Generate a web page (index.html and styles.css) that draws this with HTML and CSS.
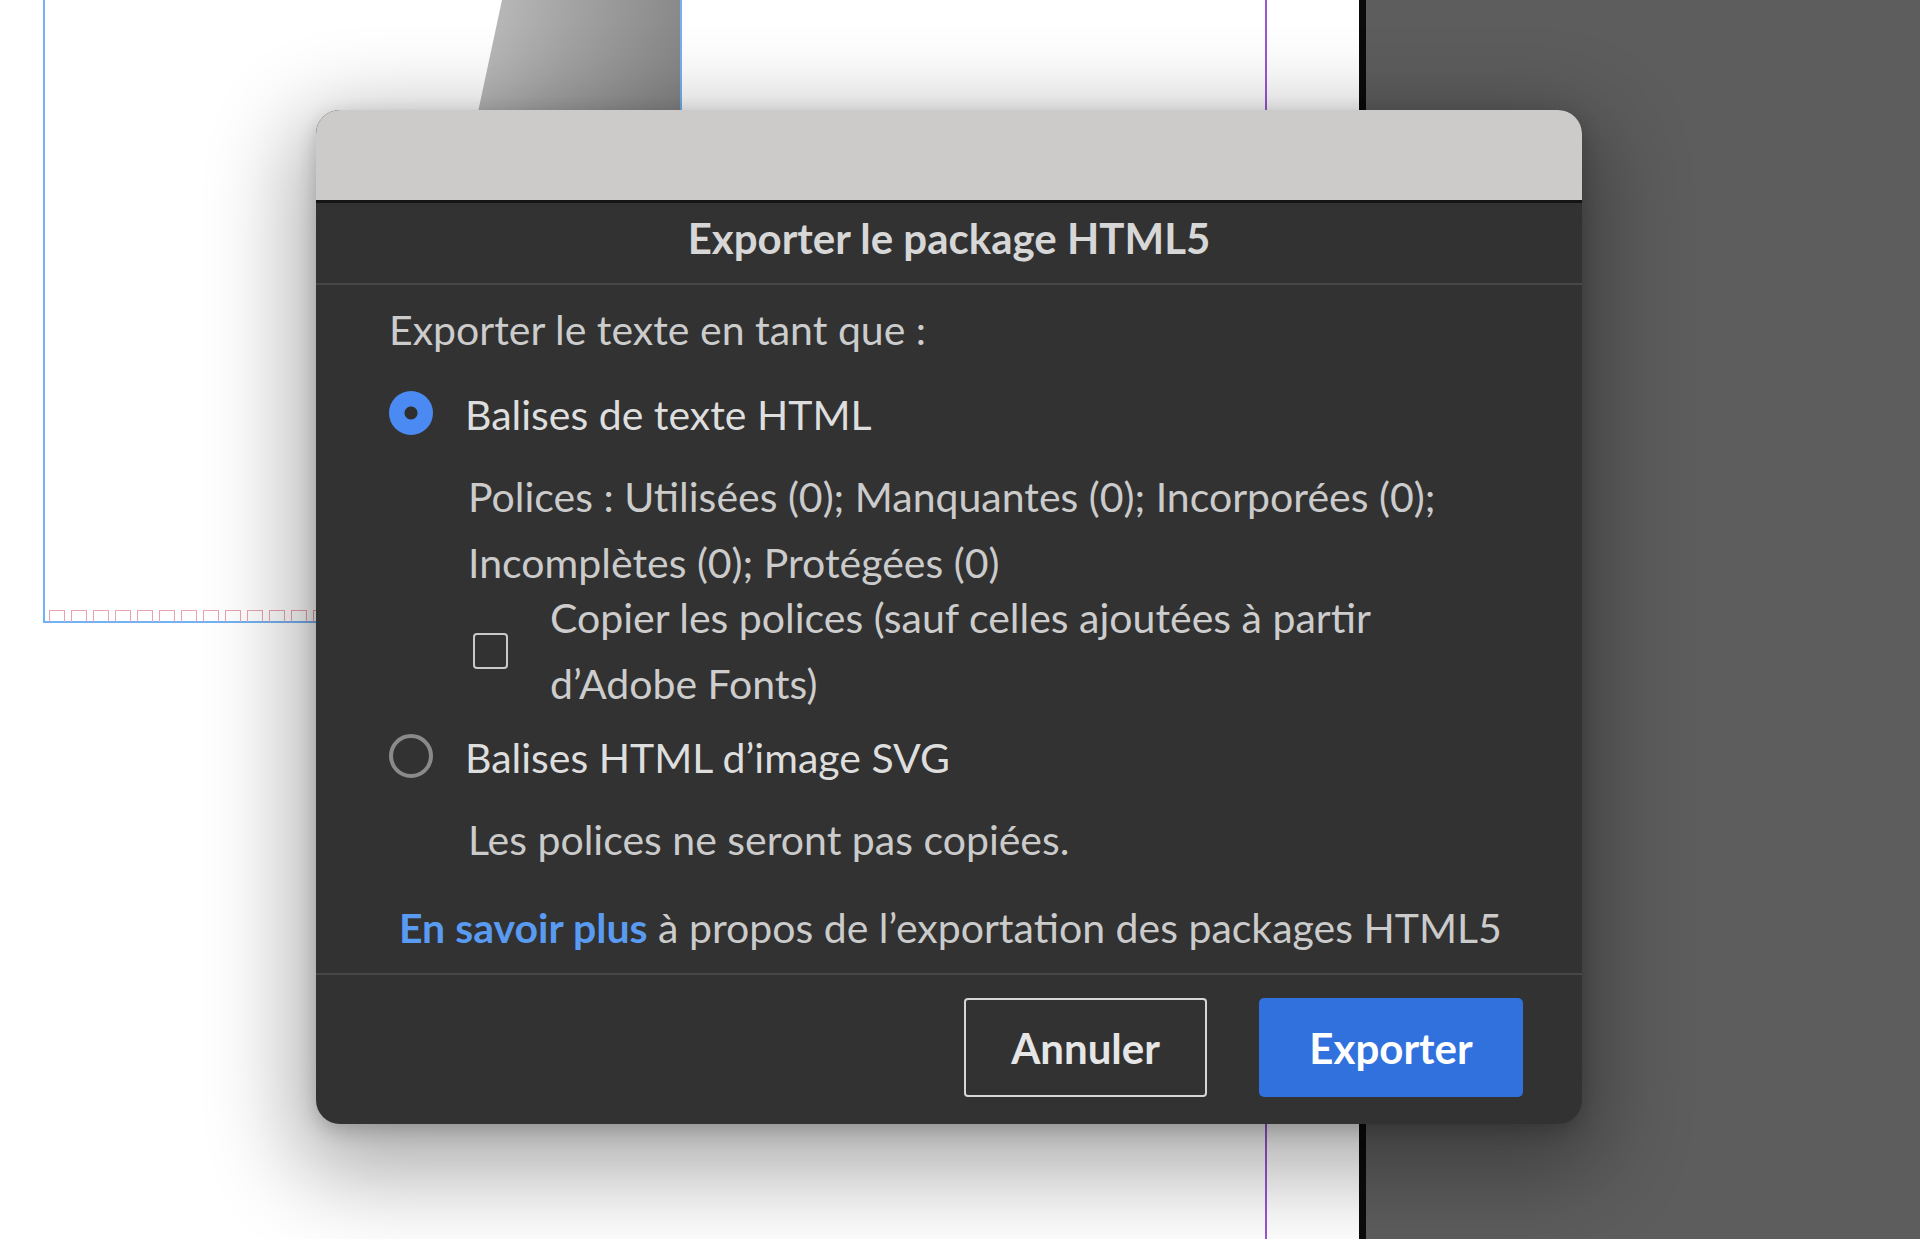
FILE: index.html
```html
<!DOCTYPE html>
<html lang="fr">
<head>
<meta charset="utf-8">
<title>Exporter le package HTML5</title>
<link rel="stylesheet" href="styles.css">
</head>
<body>
<div class="canvas">
  <div class="page">
    <div class="guide guide-margin-v"></div>
    <div class="guide guide-margin-h"></div>
    <div class="overflow-marks"></div>
    <div class="shape"></div>
    <div class="guide guide-shape-edge"></div>
    <div class="guide guide-purple"></div>
  </div>
  <div class="page-edge"></div>
  <div class="pasteboard"></div>

  <div class="dialog" role="dialog" aria-label="Exporter le package HTML5">
    <div class="titlebar"></div>
    <div class="header">Exporter le package HTML5</div>
    <div class="content">
      <div class="line label">Exporter le texte en tant que :</div>
      <div class="option option-first">
        <span class="radio radio-on"></span>
        <span class="line">Balises de texte HTML</span>
      </div>
      <div class="detail detail-fonts">
        <div class="line">Polices : Utilisées (0); Manquantes (0); Incorporées (0);</div>
        <div class="line">Incomplètes (0); Protégées (0)</div>
      </div>
      <div class="check-row">
        <span class="checkbox"></span>
        <div class="check-text">
          <div class="line">Copier les polices (sauf celles ajoutées à partir</div>
          <div class="line">d’Adobe Fonts)</div>
        </div>
      </div>
      <div class="option option-second">
        <span class="radio radio-off"></span>
        <span class="line">Balises HTML d’image SVG</span>
      </div>
      <div class="detail detail-svg">
        <div class="line">Les polices ne seront pas copiées.</div>
      </div>
      <div class="line learn"><span class="link">En savoir plus</span> à propos de l’exportation des packages HTML5</div>
    </div>
    <div class="footer">
      <button class="btn btn-cancel">Annuler</button>
      <button class="btn btn-primary">Exporter</button>
    </div>
  </div>
</div>
</body>
</html>
```

FILE: styles.css
```css
* { box-sizing: border-box; }

html, body {
  margin: 0;
  padding: 0;
  width: 1920px;
  height: 1239px;
  overflow: hidden;
  background: #5d5d5d;
  font-family: Lato, "Open Sans", sans-serif;
}

.canvas {
  position: relative;
  width: 1920px;
  height: 1239px;
  display: flex;
}

.page {
  position: relative;
  width: 1359px;
  height: 1239px;
  background: #ffffff;
  flex: none;
}

.page-edge {
  width: 7px;
  height: 100%;
  background: #0b0b0b;
  flex: none;
}

.pasteboard {
  flex: 1;
  background: #5d5d5d;
}

.guide { position: absolute; }

.guide-margin-v {
  left: 43px;
  top: 0;
  width: 2px;
  height: 623px;
  background: #72b2f2;
}

.guide-margin-h {
  left: 43px;
  top: 621px;
  width: 300px;
  height: 2px;
  background: #72b2f2;
}

.overflow-marks {
  position: absolute;
  left: 49px;
  top: 610px;
  width: 290px;
  height: 12px;
  background-image:
    repeating-linear-gradient(90deg, #e9a2b0 0 1px, transparent 1px 15px, #e9a2b0 15px 16px, transparent 16px 22px),
    repeating-linear-gradient(90deg, #e9a2b0 0 16px, transparent 16px 22px);
  background-size: 100% 12px, 100% 1px;
  background-position: 0 0, 0 0;
  background-repeat: no-repeat;
}

.shape {
  position: absolute;
  left: 478px;
  top: 0;
  width: 202px;
  height: 112px;
  background: linear-gradient(100deg, #bdbdbd 0%, #a2a2a2 45%, #858585 100%);
  clip-path: polygon(24px 0, 100% 0, 100% 100%, 0 100%);
}

.guide-shape-edge {
  left: 680px;
  top: 0;
  width: 2px;
  height: 112px;
  background: #72b2f2;
}

.guide-purple {
  left: 1265px;
  top: 0;
  width: 2px;
  height: 1239px;
  background: #9a56d6;
}

/* Dialog */
.dialog {
  position: absolute;
  left: 316px;
  top: 110px;
  width: 1266px;
  height: 1014px;
  background: #323232;
  border-radius: 24px;
  overflow: hidden;
  display: flex;
  flex-direction: column;
  box-shadow: 0 30px 90px 20px rgba(0, 0, 0, 0.33), 0 6px 20px rgba(0, 0, 0, 0.2);
  color: #cfcfcf;
  font-size: 41px;
}

.titlebar {
  height: 93px;
  flex: none;
  background: #cdcbc9;
  border-bottom: 3px solid #151515;
}

.header {
  height: 82px;
  flex: none;
  display: flex;
  align-items: center;
  justify-content: center;
  padding-bottom: 10px;
  border-bottom: 2px solid #464646;
  font-weight: 700;
  font-size: 42px;
  color: #d7d7d7;
}

.content {
  padding: 12px 0 0 73px;
  display: flex;
  flex-direction: column;
}

.line {
  line-height: 66px;
  white-space: nowrap;
}

.label { color: #cccccc; }

.option {
  display: flex;
  align-items: center;
  gap: 32px;
  color: #dedede;
}

.option-first { margin-top: 19px; }
.option-second { margin-top: 8px; }

.radio {
  width: 44px;
  height: 44px;
  border-radius: 50%;
  flex: none;
  position: relative;
  top: -2px;
}

.radio-on {
  background: radial-gradient(circle, #2f2f2f 0 6px, #4b8af2 7px);
}

.radio-off {
  border: 4px solid #8a8a8a;
}

.detail {
  margin-left: 79px;
  color: #cbcbcb;
}

.detail-fonts { margin-top: 16px; }
.detail-svg { margin-top: 16px; }

.check-row {
  display: flex;
  align-items: center;
  margin-top: -11px;
  margin-left: 84px;
  gap: 42px;
  color: #cdcdcd;
}

.checkbox {
  width: 35px;
  height: 36px;
  border: 2px solid #c9c9c9;
  border-radius: 4px;
  flex: none;
}

.learn {
  margin-top: 22px;
  margin-left: 10px;
  color: #cbcbcb;
}

.link {
  color: #5a9bf2;
  font-weight: 700;
}

.footer {
  margin-top: 12px;
  border-top: 2px solid #464646;
  display: flex;
  justify-content: flex-end;
  gap: 52px;
  padding: 23px 59px 0 0;
}

.btn {
  height: 99px;
  font-family: inherit;
  font-size: 42px;
  font-weight: 700;
  cursor: pointer;
}

.btn-cancel {
  width: 243px;
  background: transparent;
  border: 2px solid #d6d6d6;
  border-radius: 4px;
  color: #e6e6e6;
}

.btn-primary {
  width: 264px;
  background: #3171dd;
  border: none;
  border-radius: 5px;
  color: #ffffff;
}
```
